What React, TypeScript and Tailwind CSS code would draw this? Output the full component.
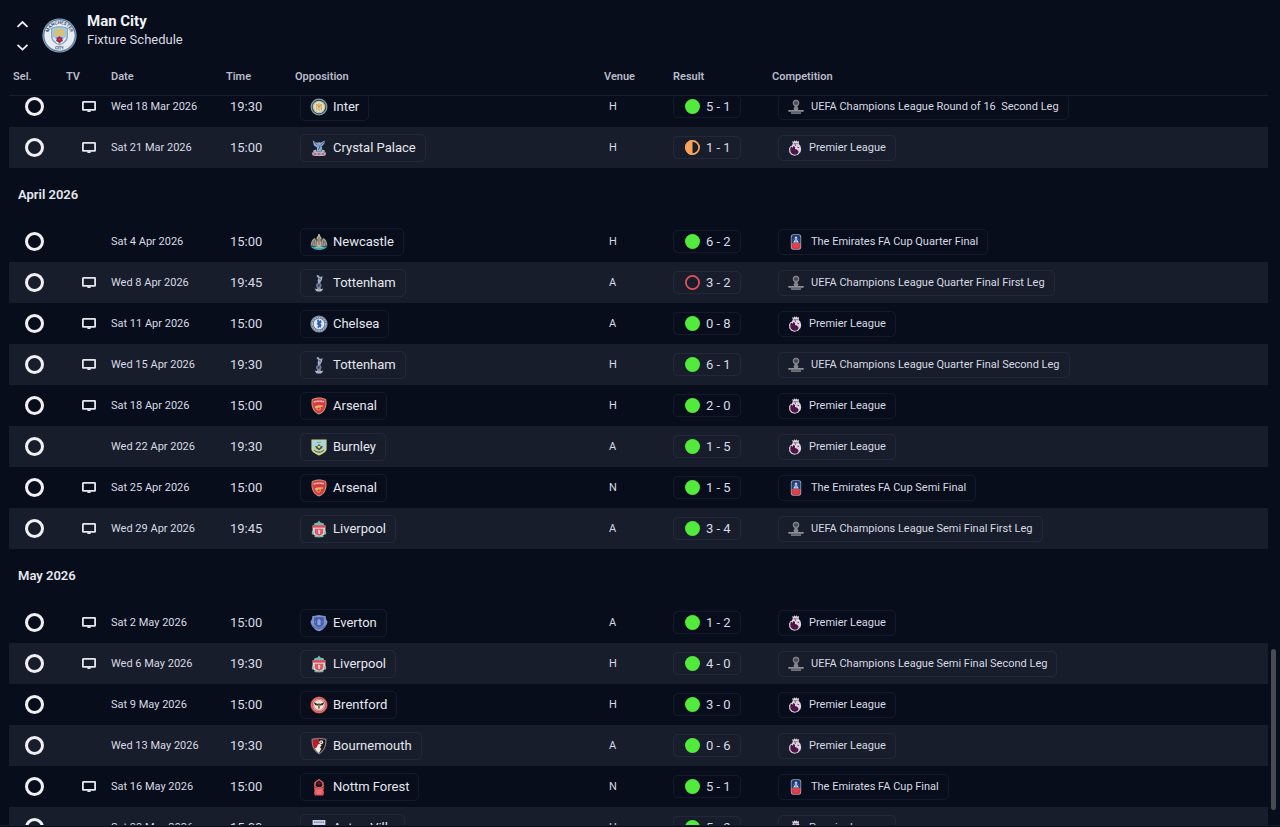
import { useLayoutEffect, useRef, useState } from 'react';
import type { ReactNode } from 'react';

type Result = 'win' | 'draw' | 'loss';
type Cup = 'ucl' | 'pl' | 'fa';

interface Fixture {
  date: string;
  time: string;
  team: string;
  venue: 'H' | 'A' | 'N';
  score: string;
  result: Result;
  cup: Cup;
  competition: string;
  tv: boolean;
}

const fx = (
  tv: boolean,
  date: string,
  time: string,
  team: string,
  venue: Fixture['venue'],
  score: string,
  cup: Cup,
  competition = 'Premier League',
  result: Result = 'win',
): Fixture => ({ tv, date, time, team, venue, score, cup, competition, result });

const months: { title?: string; fixtures: Fixture[] }[] = [
  {
    fixtures: [
      fx(true, 'Wed 18 Mar 2026', '19:30', 'Inter', 'H', '5 - 1', 'ucl', 'UEFA Champions League Round of 16  Second Leg'),
      fx(true, 'Sat 21 Mar 2026', '15:00', 'Crystal Palace', 'H', '1 - 1', 'pl', 'Premier League', 'draw'),
    ],
  },
  {
    title: 'April 2026',
    fixtures: [
      fx(false, 'Sat 4 Apr 2026', '15:00', 'Newcastle', 'H', '6 - 2', 'fa', 'The Emirates FA Cup Quarter Final'),
      fx(true, 'Wed 8 Apr 2026', '19:45', 'Tottenham', 'A', '3 - 2', 'ucl', 'UEFA Champions League Quarter Final First Leg', 'loss'),
      fx(true, 'Sat 11 Apr 2026', '15:00', 'Chelsea', 'A', '0 - 8', 'pl'),
      fx(true, 'Wed 15 Apr 2026', '19:30', 'Tottenham', 'H', '6 - 1', 'ucl', 'UEFA Champions League Quarter Final Second Leg'),
      fx(true, 'Sat 18 Apr 2026', '15:00', 'Arsenal', 'H', '2 - 0', 'pl'),
      fx(false, 'Wed 22 Apr 2026', '19:30', 'Burnley', 'A', '1 - 5', 'pl'),
      fx(true, 'Sat 25 Apr 2026', '15:00', 'Arsenal', 'N', '1 - 5', 'fa', 'The Emirates FA Cup Semi Final'),
      fx(true, 'Wed 29 Apr 2026', '19:45', 'Liverpool', 'A', '3 - 4', 'ucl', 'UEFA Champions League Semi Final First Leg'),
    ],
  },
  {
    title: 'May 2026',
    fixtures: [
      fx(true, 'Sat 2 May 2026', '15:00', 'Everton', 'A', '1 - 2', 'pl'),
      fx(true, 'Wed 6 May 2026', '19:30', 'Liverpool', 'H', '4 - 0', 'ucl', 'UEFA Champions League Semi Final Second Leg'),
      fx(false, 'Sat 9 May 2026', '15:00', 'Brentford', 'H', '3 - 0', 'pl'),
      fx(false, 'Wed 13 May 2026', '19:30', 'Bournemouth', 'A', '0 - 6', 'pl'),
      fx(true, 'Sat 16 May 2026', '15:00', 'Nottm Forest', 'N', '5 - 1', 'fa', 'The Emirates FA Cup Final'),
      fx(false, 'Sat 23 May 2026', '15:00', 'Aston Villa', 'H', '5 - 2', 'pl'),
    ],
  },
];

const crests: Record<string, ReactNode> = {
  Inter: (
    <>
      <circle cx="9" cy="9" r="8.5" fill="#7f9ba6" />
      <circle cx="9" cy="9" r="7.2" fill="#26424f" />
      <circle cx="9" cy="9" r="6.3" fill="#c9c3a4" />
      <circle cx="9" cy="9" r="5" fill="#e6dfc6" />
      <path d="M6.8 12V6.2l2.2 3 2.2-3V12M9 5v8" fill="none" stroke="#c79a52" strokeWidth="1" />
    </>
  ),
  'Crystal Palace': (
    <>
      <path d="M2.6 1.2l3.2 2.4 2 .2L9 3l1.6.7 4.2-2.2-.5 3.3-2.9 3 .9 1-1.1 3.6H6.6L7 8.6 4 6.4z" fill="#8fa9cf" />
      <path d="M4 2.8l3.4 3.4M13.8 3l-3.4 3.6M8.4 6l1.6 1.6-1.4 3" fill="none" stroke="#41608f" strokeWidth="1" />
      <path d="M3.2 11.4l2.4-1 1 2h4.8l1-2 2.4 1-.4 3H3.6z" fill="#a8b3cc" />
      <path d="M1.8 13.2l3.2.8h8l3.2-.8-.8 3.2-2.6.6H5.2l-2.6-.6z" fill="#c9a3b4" />
      <path d="M4 15h2.4m1.4 0h2.4m1.4 0H14" stroke="#8e4561" strokeWidth="1" />
    </>
  ),
  Newcastle: (
    <>
      <path d="M.6 12.5C1 8 2.6 5.4 5 5l1.4 3 .4 5.5zM17.4 12.5C17 8 15.4 5.4 13 5l-1.4 3-.4 5.5z" fill="#9c9b94" />
      <path d="M2.400 13l.8-5m1.600 5.400L4.400 7M15.600 13l-.8-5m-1.600 5.400l.4-6.400" stroke="#62645f" strokeWidth=".7" />
      <path d="M6.6 14V4.4L7.8 3l.5-2h1.4l.5 2 1.2 1.4V14z" fill="#c0b19b" />
      <path d="M9 4v8M7.6 6v2.4m2.8-2.4v2.4" stroke="#6e665a" strokeWidth=".9" />
      <path d="M.8 13.200c2.600.8 5.200 0 8.200.8 3-.8 5.600 0 8.200-.8-1 2.400-4.200 3.800-8.200 3.800s-7.200-1.400-8.200-3.800z" fill="#3fa6b8" />
      <path d="M5 14.600h8" stroke="#c9ba8a" strokeWidth=".8" />
    </>
  ),
  Tottenham: (
    <>
      <circle cx="8.800" cy="11.400" r="2.700" fill="#6f7a99" />
      <path d="M7 1l2 .5.800 1.600 2.800-.8-.5 3.200L10.400 8.400l-.5 1.200H8.200L7.600 7l.6-3L6.600 2.200z" fill="#a0a8c0" />
      <path d="M8.800 4.500l1.800.8M7.800 11l2 .9M9.200 9.600l-1 3.400" stroke="#333c5b" strokeWidth=".9" />
      <path d="M7.400 13.600h3l.4 1.400H7z" fill="#8f97b0" />
      <path d="M4.800 14.600c1.400.8 7 .8 8.400 0-.3 1.400-1.300 2.500-2.200 2.800H7c-.9-.3-1.900-1.400-2.200-2.800z" fill="#b4b9ca" />
    </>
  ),
  Chelsea: (
    <>
      <circle cx="9" cy="9" r="8.600" fill="#8f949f" />
      <circle cx="9" cy="9" r="7.500" fill="#53739f" />
      <circle cx="9" cy="9" r="6.700" fill="none" stroke="#b6bfcd" strokeWidth="1.200" strokeDasharray="1.600 .8" />
      <circle cx="9" cy="9" r="5.400" fill="#e4e9f2" />
      <path d="M7 4.800l1.600-.4.8 1.600 1.600-1 .6 2.400-1.400 1.200 1.400 1.200-1 3-1.200-.8-1.400 1.400-.6-1.800 1-1.400L6.600 9l1-1.400z" fill="#2f62b2" />
    </>
  ),
  Arsenal: (
    <>
      <path d="M9 .6c2.600 0 5 .6 7.200 1.600.6 3.800.5 7.200-1.200 10.200-1.400 2.400-3.400 4-6 5.200-2.600-1.200-4.600-2.800-6-5.200C1.300 9.400 1.200 6 1.800 2.200 4 1.200 6.400.6 9 .6z" fill="#c3a07c" />
      <path d="M9 1.500c2.300 0 4.400.5 6.300 1.300.5 3.400.4 6.500-1.100 9.200-1.200 2.100-3 3.600-5.200 4.600-2.200-1-4-2.500-5.200-4.600C2.300 9.300 2.200 6.200 2.700 2.800 4.600 2 6.700 1.500 9 1.500z" fill="#d93a40" />
      <path d="M3.800 4.900c3.400-.9 7-.9 10.400 0" fill="none" stroke="#f1dedc" strokeWidth="1.500" strokeDasharray="1.100 .4" />
      <path d="M4.600 9.600c2-1.600 5.800-1.700 8.600-1.100l-.3 1.200-4 .6-1.600 1.200-2-.3z" fill="#dcae6c" />
      <circle cx="8.600" cy="11.400" r="1.800" fill="none" stroke="#e6b976" strokeWidth=".9" />
    </>
  ),
  Burnley: (
    <>
      <path d="M1.400 1.400h15.200V11c0 3-4 5-7.600 6.600C5.400 16 1.400 14 1.400 11z" fill="#d3d48c" />
      <path d="M2.400 2.400h13.200V11c0 2.300-3.200 4-6.600 5.500C5.600 15 2.400 13.300 2.400 11z" fill="#a9d6e0" />
      <path d="M6.800 4.400h4.400" stroke="#8fae9a" strokeWidth="1.200" />
      <path d="M5 8l2 .2L9 6l2 2.200 2-.2-1.400 2.400L9 12.200l-2.600-1.800z" fill="#454f2c" />
      <path d="M7.200 8.800L9 7.600l1.800 1.200L9 10.400z" fill="#e8df7c" />
      <path d="M3.600 10.600c1.200 3 3.400 4 5.400 4s4.200-1 5.400-4" fill="none" stroke="#d8cf6a" strokeWidth="1.800" />
      <path d="M4.200 12.200c2.800 2.600 6.800 2.600 9.600 0" fill="none" stroke="#454f2c" strokeWidth="1" />
    </>
  ),
  Liverpool: (
    <>
      <path d="M9 .4l1.400 2 3.200.8.6 2.200H3.800l.6-2.200 3.200-.8z" fill="#79b8ab" />
      <path d="M2.600 5.200h12.800v7.200c0 1.800-3 3.800-6.400 4.800-3.400-1-6.400-3-6.400-4.800z" fill="#dad4d4" />
      <path d="M2.800 5.200h12.400v2.400H2.800z" fill="#d94a57" />
      <path d="M4.800 8.800h8.400v3.600c0 1.400-2 2.600-4.200 3.400-2.200-.8-4.200-2-4.200-3.400z" fill="#e15661" />
      <path d="M8 9.400l2.400 1-.6 3.600H8.600z" fill="#f4dedb" />
      <path d="M2 10.400l1.800 1.400v3l-2-.6zM16 10.400l-1.800 1.400v3l2-.6zM4 15.800h10l-1.200 1.500H5.200z" fill="#7abdad" />
    </>
  ),
  Everton: (
    <>
      <path d="M2.400 1.800c2 .8 4-.8 6.600-.8s4.600 1.600 6.600.8c0 2.600.6 4 1.900 5.600-.6 4.400-4 8.600-8.500 9.900C4.500 16 1.100 11.800.5 7.400 1.800 5.800 2.400 4.400 2.400 1.800z" fill="#7f93cb" />
      <path d="M4.200 3.200h9.600v6.200c0 1.800-2.400 3.200-4.800 4-2.400-.8-4.800-2.200-4.800-4z" fill="#3f5dab" />
      <path d="M7.600 11V6.400L9 4.800l1.400 1.600V11zM5.600 7v2m6.800-2v2" fill="#8ea3d6" stroke="#8ea3d6" strokeWidth=".5" />
      <path d="M2.200 11.600c3.800 3.600 9.800 3.600 13.600 0" fill="none" stroke="#5068ad" strokeWidth="1.200" />
    </>
  ),
  Brentford: (
    <>
      <circle cx="9" cy="9" r="8.600" fill="#cf3e40" />
      <circle cx="9" cy="9" r="7.400" fill="none" stroke="#e2a49e" strokeWidth=".6" />
      <circle cx="9" cy="9" r="6.200" fill="#ebe4dc" />
      <circle cx="9" cy="9" r="5.400" fill="none" stroke="#c5474b" strokeWidth=".7" />
      <path d="M3.600 6.200L8 8l1-.8 1 .8 4.400-1.800-1.800 3-2.400.4L9 13.600 7.800 9.600l-2.400-.4z" fill="#2c3129" />
      <path d="M7.800 9.200h2.400m-2 1.500h1.600" stroke="#d4a945" strokeWidth=".9" />
    </>
  ),
  Bournemouth: (
    <>
      <path d="M1.600 1.800L9 .8l7.400 1C16.800 9 14.600 14 9 17.400 3.400 14 1.200 9 1.600 1.800z" fill="#8d8888" />
      <path d="M2.600 2.700L9 1.800v14.400C4.600 13.200 2.500 8.800 2.600 2.700z" fill="#b61e2c" />
      <path d="M9 1.800l6.400.9c.1 6.100-2 10.500-6.400 13.500z" fill="#1a1718" />
      <circle cx="11.200" cy="5.200" r="2" fill="#e9e6e3" />
      <path d="M7.600 8c1.400-1.600 3.600-1 4 .6L10 10.200l1.200 1.600-2.200 4.400-2.600-2.400-1.600-2.600c1.600-.2 2.600-1.200 2.800-3.200z" fill="#efecea" />
      <circle cx="11.200" cy="5.200" r=".7" fill="#24201f" />
    </>
  ),
  'Nottm Forest': (
    <>
      <path d="M9 .8l4.600 3.400.4 4-2.800 2H6.800L4 8.200l.4-4z" fill="#e05f63" />
      <path d="M9 2.200l3 2.600.4 3-2 1.400H7.600l-2-1.400.4-3z" fill="#1f1119" />
      <path d="M9 2.800v4M6.800 5l2.200 1 2.200-1" stroke="#7d3238" strokeWidth=".6" fill="none" />
      <path d="M3.800 9.200l3.400.6L9 9l1.800.8 3.400-.6-.8 3 .6 2.400-.8 2.800H4.800L4 14.600l.6-2.400z" fill="#e3585f" />
      <path d="M6 12.800h6M6.600 15h4.800" stroke="#f09a98" strokeWidth=".8" />
    </>
  ),
  'Aston Villa': (
    <>
      <path d="M2.600 1h12.800v10c0 3-3.400 5-6.400 6.400C6 16 2.600 14 2.600 11z" fill="#c9d2e6" />
      <path d="M4 3.200h10" stroke="#7f90b8" strokeWidth="1.600" strokeDasharray="1.600 .5" />
      <path d="M6 7.400l3-1.400 3 1.400-1 6-2 1.600-2-1.600z" fill="#7b2c4c" />
    </>
  ),
};

function ManCityCrest() {
  return (
    <svg viewBox="0 0 36 36" className="size-[35px] shrink-0" aria-hidden="true">
      <defs>
        <path id="crest-top" d="M6.200 18a11.800 11.800 0 0 1 23.600 0" />
        <path id="crest-bottom" d="M3.600 18a14.400 14.400 0 0 0 28.800 0" />
      </defs>
      <circle cx="18" cy="18" r="17.600" fill="#8aa7c3" />
      <circle cx="18" cy="18" r="16.400" fill="none" stroke="#55789c" strokeWidth="1" />
      <circle cx="18" cy="18" r="15.400" fill="#e8ecf2" />
      <text fontFamily="Roboto, sans-serif" fontSize="4.600" fontWeight="700" fill="#3c506f" textAnchor="middle">
        <textPath href="#crest-top" startOffset="50%">MANCHESTER</textPath>
      </text>
      <text fontFamily="Roboto, sans-serif" fontSize="4.600" fontWeight="700" fill="#3c506f" textAnchor="middle">
        <textPath href="#crest-bottom" startOffset="50%">CITY</textPath>
      </text>
      <path d="M9.400 10.200c5.400-2.200 11.800-2.200 17.200 0v8.800c0 4.800-4 7.200-8.600 9.400-4.600-2.200-8.600-4.600-8.600-9.400z" fill="#7f9dbb" />
      <path d="M10.400 11c4.800-1.900 10.400-1.900 15.200 0v7.800c0 4.200-3.400 6.400-7.600 8.400-4.200-2-7.600-4.200-7.600-8.400z" fill="#9fc9e8" />
      <path d="M11.600 20.400l5 5.600m7.800-5.600l-5 5.600" stroke="#ecf3f8" strokeWidth="1.500" />
      <path d="M12.200 16.400h11.600l.8 1.600H11.400zM13 16l.3-3.200 2.300-.6.400 3.800zM16.600 16l.1-5.200h2.600l.1 5.200zM20 16l.4-3.800 2.300.6.300 3.200z" fill="#efbe48" />
      <path d="M13.200 12l1.300-1 1 1m5 0l1-1 1.300 1" stroke="#efbe48" fill="none" />
      <path d="M18 18.600l1.300 1.300 1.900.2-.4 1.900.8 1.700-1.700.7L18 26l-1.900-1.600-1.700-.7.800-1.700-.4-1.900 1.900-.2z" fill="#a3263f" />
      <circle cx="18" cy="22" r="1" fill="#c4485a" />
    </svg>
  );
}

function CupIcon({ cup }: { cup: Cup }) {
  if (cup === 'ucl') {
    return (
      <svg viewBox="0 0 16 16" className="size-4 shrink-0" aria-hidden="true">
        <circle cx="8" cy="4" r="2.900" fill="#6d6f76" stroke="#8c8e94" strokeWidth=".9" />
        <path d="M8 1.800v4.400M6 3.200l4 1.600M6 4.900l4-1.700" stroke="#34373f" strokeWidth=".6" />
        <path d="M6.400 7.100h3.200v1.300l1 .9-.8 1.900H6.200l-.8-1.900 1-.9z" fill="#85878d" />
        <path d="M.4 11h15.200v1.700H.4z" fill="#9a9ca1" />
        <path d="M3 13.300h10v1.500H3z" fill="#85878d" />
        <path d="M2 11.900h2m1 0h2m1 0h3m1 0h2" stroke="#6a6d73" strokeWidth=".5" />
      </svg>
    );
  }
  if (cup === 'pl') {
    return (
      <svg viewBox="0 0 14 16" className="h-4 w-[14px] shrink-0" aria-hidden="true">
        <path d="M4.800 3.800L4.200.9l1.400.9L6.500.2l1 1.400L8.900.2l.5 1.500 1.700-.7-.5 2.800 1.900 2.200.7 3.200-.6 2.800-2.500 2.800-3.600.9-3.200-.9-2-2.500-.2-3.800 1.200-2.300 1.400-.4z" fill="#ddd4df" />
        <path d="M2.900 6.600l1.900 1.200.4-1.900 1.900 1-.2 2.200 1.900.4 1.700 1.700-.2 1.900-1.700 1.300-2 .3-2.300-.7-1.800-2-.2-3z" fill="#4d1247" />
        <path d="M5.600 3.700h4" stroke="#6a5a70" strokeWidth=".8" />
        <path d="M6.800 4.900l1.200.3" stroke="#4d1247" strokeWidth=".9" />
        <path d="M9.400 7.200l1.600.5" stroke="#4d1247" strokeWidth=".8" />
      </svg>
    );
  }
  return (
    <svg viewBox="0 0 16 16" className="size-4 shrink-0" aria-hidden="true">
      <rect x="2.800" y=".3" width="10.400" height="15.400" rx="2.600" fill="#9ba3b8" />
      <path d="M3.600 9.200V3.500A2.300 2.300 0 0 1 5.900 1.100h4.200a2.300 2.300 0 0 1 2.300 2.400v5.700z" fill="#1e3b78" />
      <path d="M3.600 9.200h8.800v3.300a2.300 2.300 0 0 1-2.300 2.400H5.900a2.300 2.300 0 0 1-2.300-2.400z" fill="#e0323d" />
      <path d="M8 2.200l1.300 1.300-.2 2.200L11 8.400H5l1.900-2.700-.2-2.200z" fill="#cdd6ea" />
      <path d="M8 4v4M5.200 5.400l1 .8m4.600-.8l-1 .8" stroke="#5d78b0" strokeWidth=".8" />
      <path d="M5 11h6M5.800 12.900h4.400" stroke="#ea5c62" strokeWidth=".7" />
    </svg>
  );
}

function ResultDot({ result }: { result: Result }) {
  return (
    <svg viewBox="0 0 15 15" className="size-[15px] shrink-0" role="img" aria-label={result}>
      {result === 'win' && <circle cx="7.500" cy="7.500" r="7.500" fill="#52ea3c" />}
      {result === 'loss' && <circle cx="7.500" cy="7.500" r="6.600" fill="none" stroke="#e2515a" strokeWidth="1.800" />}
      {result === 'draw' && (
        <>
          <circle cx="7.500" cy="7.500" r="6.600" fill="none" stroke="#f9a35a" strokeWidth="1.800" />
          <path d="M7.500 0a7.500 7.500 0 0 0 0 15z" fill="#f9a35a" />
        </>
      )}
    </svg>
  );
}

function TvIcon() {
  return (
    <svg viewBox="0 0 14 12" className="h-3 w-[14px]" role="img" aria-label="Televised">
      <rect x=".9" y=".9" width="12.200" height="8" rx=".4" fill="none" stroke="#e6e7ee" strokeWidth="1.800" />
      <path d="M5.200 9.200h3.600v1.200l-.8.600H6l-.8-.6z" fill="#e6e7ee" />
    </svg>
  );
}

function Chevron({ up = false }: { up?: boolean }) {
  return (
    <svg viewBox="0 0 13 8" className="h-2 w-[13px]" aria-hidden="true">
      <path d={up ? 'M1.500 6.800l5-4.800 5 4.800' : 'M1.500 1.800l5 4.800 5-4.800'} fill="none" stroke="#eeeff4" strokeWidth="1.800" />
    </svg>
  );
}

function Row({ f, selected, onSelect }: { f: Fixture; selected: boolean; onSelect: () => void }) {
  return (
    <tr className="h-[41px] even:bg-[#171d2b]">
      <td className="pl-4">
        <input
          type="radio"
          name="fixture"
          aria-label={`Select ${f.team}, ${f.date}`}
          checked={selected}
          onChange={onSelect}
          className="block size-[19px] appearance-none rounded-full border-[3px] border-[#f0f0f5] checked:bg-[#f0f0f5]"
        />
      </td>
      <td className="pl-5">{f.tv && <TvIcon />}</td>
      <td className="pt-px pl-1 text-[11px] leading-4">{f.date}</td>
      <td className="pl-2 text-[13px]">{f.time}</td>
      <td className="pl-[9px]">
        <a href="#" className="flex h-7 w-fit items-center gap-[5px] rounded-[5px] border border-[#7c8ab01c] px-[9px] text-[13px] text-[#e6e7ee]">
          <svg viewBox="0 0 18 18" className="size-[18px] shrink-0" aria-hidden="true">
            {crests[f.team]}
          </svg>
          {f.team}
        </a>
      </td>
      <td className="pt-px pl-[9px] text-[11px] leading-4">{f.venue}</td>
      <td className="pl-1">
        <a href="#" className="flex h-[23px] w-fit items-center gap-1.5 rounded-[5px] border border-[#7c8ab01c] pr-[9px] pl-[11px] text-[13px]">
          <ResultDot result={f.result} />
          {f.score}
        </a>
      </td>
      <td className="pt-px pl-[10px]">
        <a href="#" className="flex h-[26px] w-fit items-center gap-[7px] rounded-[5px] border border-[#7c8ab01c] px-[9px] text-[11px] leading-4 whitespace-pre">
          <CupIcon cup={f.cup} />
          {f.competition}
        </a>
      </td>
    </tr>
  );
}

const columns = ['Sel.', 'TV', 'Date', 'Time', 'Opposition', 'Venue', 'Result', 'Competition'];

export default function App() {
  const scroller = useRef<HTMLDivElement>(null);
  const [selected, setSelected] = useState('');

  useLayoutEffect(() => {
    if (scroller.current) scroller.current.scrollTop = 10;
  }, []);

  return (
    <main className="flex h-screen flex-col bg-[#070d1b] pb-px font-['Roboto',sans-serif] text-[#d9dae3]">
      <header className="flex h-[59px] shrink-0 items-center pt-3 pl-4">
        <div className="flex flex-col gap-[15px]">
          <button type="button" aria-label="Previous club">
            <Chevron up />
          </button>
          <button type="button" aria-label="Next club">
            <Chevron />
          </button>
        </div>
        <div className="ml-[13px] flex items-center gap-[10px]">
          <ManCityCrest />
          <div className="-mt-[11px]">
            <h1 className="text-[15px] leading-[18px] font-bold text-[#f1f1f6]">Man City</h1>
            <p className="text-[13px] leading-[19px]">Fixture Schedule</p>
          </div>
        </div>
      </header>

      <div className="relative flex min-h-0 flex-1 flex-col border-b border-[#171b28]">
        <div ref={scroller} className="mr-3 ml-[9px] min-h-0 flex-1 overflow-y-auto [scrollbar-width:none]">
          <table className="w-full table-fixed border-separate border-spacing-0 text-left">
            <colgroup>
              <col className="w-[53px]" />
              <col className="w-[45px]" />
              <col className="w-[115px]" />
              <col className="w-[69px]" />
              <col className="w-[309px]" />
              <col className="w-[69px]" />
              <col className="w-[99px]" />
              <col />
            </colgroup>
            <thead className="sticky top-0 z-10 bg-[#070d1b]">
              <tr className="h-[37px]">
                {columns.map((c) => (
                  <th key={c} scope="col" className="border-b border-[#171d2b] pl-1 text-[11px] font-semibold text-[#b9bac9]">
                    {c}
                  </th>
                ))}
              </tr>
            </thead>
            {months.map((m, i) => [
              m.title && (
                <tbody key={m.title}>
                  <tr className="h-[53px]">
                    <th colSpan={8} scope="rowgroup" className="pl-[9px] text-[13px] leading-5 font-semibold text-[#e6e7ee]">
                      {m.title}
                    </th>
                  </tr>
                </tbody>
              ),
              <tbody key={i}>
                {m.fixtures.map((f) => (
                  <Row key={f.date} f={f} selected={selected === f.date} onSelect={() => setSelected(f.date)} />
                ))}
              </tbody>,
            ])}
          </table>
        </div>
        <div className="absolute top-[77%] right-1 h-[21%] w-[5px] rounded-full bg-[#484b54]" />
      </div>
    </main>
  );
}
